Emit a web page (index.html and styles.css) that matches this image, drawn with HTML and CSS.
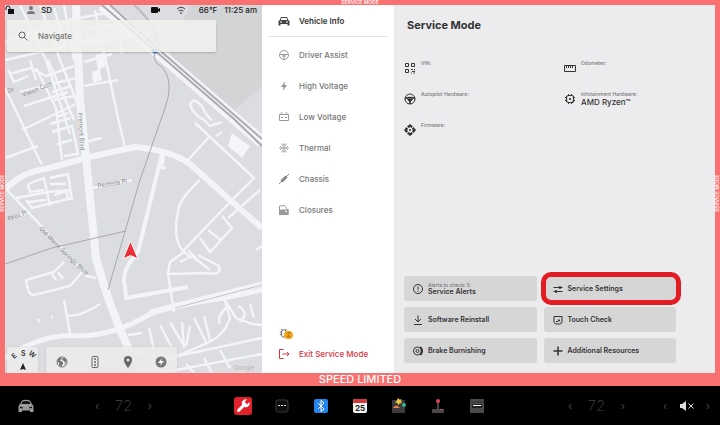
FILE: index.html
```
<!DOCTYPE html>
<html lang="en">
<head>
    <meta charset="UTF-8">
    <meta name="viewport" content="width=device-width, initial-scale=1.0">
    <title>Service Mode</title>
    <link rel="stylesheet" href="styles.css">
</head>
<body>
    <div class="frame">
        <div class="mode-label top">SERVICE MODE</div>
        <div class="mode-label left">SERVICE MODE</div>
        <div class="mode-label right">SERVICE MODE</div>

        <section class="map">
            <svg class="map-canvas" viewBox="5 5 257 368" preserveAspectRatio="xMidYMid slice" aria-hidden="true">
                <rect x="5" y="5" width="257" height="368" fill="#dcdde0"/>
                <path d="M190 5H262V86L232 112L168 58Z" fill="#d2d4d6"/>
                <!-- side streets -->
                <g fill="none" stroke="#f4f5f8" stroke-width="2.400">
                    <path d="M5 42L70 20L110 12M5 60L76 44L118 30M20 5L46 60L70 134M5 88L42 165M40 5L60 60L80 110M54 8L66 50M64 5L74 60M10 74L30 68L46 76L74 66M20 92L76 78M24 106L68 92M22 130L76 104M5 158L38 146M36 68L56 108L62 160M48 60L74 120M30 60L36 80M8 70L14 82L28 76M84 30L130 22M84 44L150 34M95 10L104 55M118 20L122 54M84 86L118 80M104 52L118 118L125 147M84 62L112 54M84 142L102 138"/>
                    <path d="M52 92L72 86M54 100L74 96M50 124L70 118M52 132L72 126L78 154L64 156M57 144L72 140M56 117L68 113"/>
                    <path d="M28 184L44 178L50 206M28 184L30 192L44 190M50 178L68 174L72 200M50 184L66 184M16 198L48 192L70 190M26 200L32 208L72 198M28 202L46 200M54 195L66 191L68 198"/>
                    <path d="M7 190L70 256L86 276L96 278M84 270L70 286L34 295Q28 296 26 280L54 272L64 262M52 274L56 280M58 272L63 279M64 300L70 333M68 316Q82 316 100 304M92 188L132 180M14 216L28 213"/>
                    <path d="M200 180Q178 200 178 212Q172 240 184 252L192 258M184 252L170 262L168 274L174 312M260 190L228 218M209 137L188 160M195 123L208 135L254 178L230 202M216 136L222 132M168 274L208 273Q222 276 219 266L198 255M230 202L184 250M222 216L232 228L210 252L200 238M208 230L221 240M188 250L196 258M180 262L192 256L210 270M164 154L162 168L166 168"/>
                    <path d="M190 104Q194 96 203 108Q206 116 212 120M190 104Q192 114 204 120L210 126L222 122M128 335L142 333M149 328L154 350M160 325L172 348M170 322L184 346M182 322L184 348M194 318L206 342M204 316L210 340M190 326L186 346M130 350L168 360L200 346Q224 338 230 318L224 298M226 302L236 318L252 324L262 325M238 306Q250 312 240 322M220 324Q216 316 228 306M250 304L254 318M150 362L262 338M160 373L262 354M186 364L194 373M204 358L212 373M220 350L230 368M256 250L262 246"/>
                </g>
                <g fill="#f4f5f8">
                    <path d="M95 55L104 53L105 66L100 70L102 80L93 83L92 72L98 70Z"/>
                    <path d="M232 133L250 146L242 158L228 146Z"/>
                    <path d="M37 319l2 5 1-5zM51 316l2 4v-5z"/>
                </g>
                <!-- main roads -->
                <g fill="none" stroke="#f3f4f8" stroke-linejoin="round">
                    <path d="M162 154L138 252Q120 272 125 286L126 298L188 287" stroke-width="4"/>
                    <path d="M5 190Q20 172 50 168L85 158L135 147Q170 150 190 164L230 200L262 228" stroke-width="6"/>
                    <path d="M76 5L80 100L86 158L96 258Q108 304 130 352" stroke-width="8"/>
                    <path d="M5 358Q45 332 80 336Q116 335 150 314Q170 306 224 298L262 290M150 312L262 284" stroke-width="5"/>
                    <path d="M102 5L160 54L248 130L262 142" stroke-width="12"/>
                </g>
                <!-- freeway and rail -->
                <g fill="none" stroke="#acabb0" stroke-width="2">
                    <path d="M102 5L160 55L234 119L262 146M110 5L164 54L262 139"/>
                </g>
                <path d="M134 5Q160 28 158 50" fill="none" stroke="#bbbbc0" stroke-width="2"/>
                <path d="M155 52Q152 62 162 67Q172 78 168 98Q164 112 158 128L140 180L108 290M5 264L52 248L126 231" fill="none" stroke="#a9a9ad"/>
                <path d="M175 308L262 285" fill="none" stroke="#c4c4c8"/>
                <path d="M151 49h8l-1 3q-3 3-6 0z" fill="#4b78c8"/>
                <g class="street">
                    <text transform="translate(78 113) rotate(86)">Fremont Blvd</text>
                    <text transform="translate(23 97) rotate(-22)">Vision Com</text>
                    <text transform="translate(98 188) rotate(-10)">Pestena Pl</text>
                    <text transform="translate(39 229) rotate(45)">Old Warm Springs Blvd</text>
                    <text transform="translate(8 220) rotate(-16)">eyes Pl</text>
                    <text transform="translate(8 93) rotate(-16)">Dr</text>
                    <text class="city" x="90" y="371">Fremont, CA</text>
                    <text class="google" x="234" y="370">Google</text>
                </g>
                <path d="M130.500 241L138 259L130.500 255.500L123 259Z" fill="#ee2f3b" stroke="#fff"/>
            </svg>

            <header class="status">
                <svg class="lock" viewBox="0 0 10 10"><path d="M1 5V3a2 2 0 0 1 4 0v2" fill="none" stroke="#111"/><rect x="3" y="4" width="6" height="5" fill="#111"/></svg>
                <svg class="person" viewBox="0 0 10 10"><circle cx="5" cy="3" r="2" fill="#777"/><path d="M1 9q0-3 4-3t4 3z" fill="#777"/></svg>
                <span>SD</span>
                <svg class="camera" viewBox="0 0 10 10"><rect x="0" y="2" width="7" height="6" rx="1" fill="#111"/><path d="M7 4l2-1v4l-2-1z" fill="#111"/></svg>
                <svg class="wifi" viewBox="0 0 10 10" fill="none" stroke="#444"><path d="M1 4q4-3.500 8 0M2.500 6q2.500-2 5 0"/><circle cx="5" cy="8" r=".5"/></svg>
                <span class="temp">66°F</span>
                <time>11:25 am</time>
            </header>

            <label class="search">
                <svg viewBox="0 0 10 10" fill="none" stroke="#666"><circle cx="4" cy="4" r="3"/><path d="M6.200 6.200L9.500 9.500"/></svg>
                <input type="text" placeholder="Navigate" aria-label="Navigate">
            </label>

            <div class="map-tools">
                <button class="compass" aria-label="Compass">
                    <svg viewBox="0 0 31 26">
                        <text transform="translate(7 12) rotate(-40)">E</text>
                        <text x="14" y="9">S</text>
                        <text transform="translate(21 7) rotate(40)">W</text>
                        <path d="M16 16l3 7-3-1-3 1z" fill="#222"/>
                    </svg>
                </button>
                <div class="toolbar">
                    <button aria-label="Satellite"><svg viewBox="0 0 12 12"><circle cx="6" cy="6" r="5" fill="#f2f2f2" stroke="#777"/><path d="M1 5l1-2 3-2 1 2-2 1 1 1 2 1v2l-2 3-2-2V7zM7 2l2 0 2 3-2 2-1-2-2-1zM8 8l2-1-1 2z" fill="#777"/></svg></button>
                    <button aria-label="Traffic"><svg viewBox="0 0 12 12"><rect x="3" y=".5" width="6" height="11" rx="1" fill="none" stroke="#666"/><circle cx="6" cy="3" r="1" fill="#666"/><circle cx="6" cy="6" r="1" fill="#666"/><circle cx="6" cy="9" r="1" fill="#666"/></svg></button>
                    <button aria-label="Places"><svg viewBox="0 0 12 12"><path d="M6 12Q2 7 2 4a4 4 0 0 1 8 0q0 3-4 8zM6 2.500a1.500 1.500 0 1 0 0 3 1.500 1.500 0 0 0 0-3z" fill="#666" fill-rule="evenodd"/></svg></button>
                    <button aria-label="Charging"><svg viewBox="0 0 12 12"><circle cx="6" cy="6" r="5.500" fill="#777"/><path d="M7 2L3 7h3l-1 3 4-5H6z" fill="#fff"/></svg></button>
                </div>
            </div>
        </section>

        <nav class="sidebar">
            <a class="active" href="#"><svg viewBox="0 0 12 12"><path d="M3 2h6l1.200 3L11.500 6v4.500h-2V9h-7v1.500h-2V6L1.800 5z" fill="#444"/><path d="M3.500 3h5l.6 2H2.900zM2 6.500h2v1H2zM8 6.500h2v1H8z" fill="#fff"/></svg>Vehicle Info</a>
            <a href="#"><svg viewBox="0 0 12 12" fill="none" stroke="#999"><circle cx="6" cy="6" r="4.500"/><path d="M1.500 5.500h9M6 6v4.500M4 7h4"/></svg>Driver Assist</a>
            <a href="#"><svg viewBox="0 0 12 12"><path d="M7 1L3 7h2.500L5 11l4-6H6.500z" fill="#999"/></svg>High Voltage</a>
            <a href="#"><svg viewBox="0 0 12 12" fill="none" stroke="#999"><path d="M1.500 3.500h9v6h-9zM2.500 2h2M7.500 2h2M3 6.500h2M7 6.500h2"/></svg>Low Voltage</a>
            <a href="#"><svg viewBox="0 0 12 12" fill="none" stroke="#999" stroke-width=".8"><path d="M1 6h10M3.500 1.700l5 8.600M8.500 1.700l-5 8.600M2 4l2 2-2 2M10 4L8 6l2 2M5 1.500l1 2 1-2M5 10.500l1-2 1 2"/></svg>Thermal</a>
            <a href="#"><svg viewBox="0 0 12 12" stroke="#888"><path d="M1 11l3-3M8 4l3-3"/><path d="M3.500 8.500l5-5" stroke-width="3"/></svg>Chassis</a>
            <a href="#"><svg viewBox="0 0 12 12"><path d="M1.500 6V2l5-.5L9.500 5.500" fill="none" stroke="#999"/><path d="M1 5.500h10l-.5 5.500H1zM7 7h2v1H7z" fill="#999" fill-rule="evenodd"/></svg>Closures</a>
            <div class="bug">
                <svg viewBox="0 0 12 12" fill="none" stroke="#555"><path d="M3 5q0-3 3-3t3 3v3q0 3-3 3T3 8zM3 1l1 2M9 1L8 3M1 5h2M1 8h2"/></svg>
                <span class="badge">2</span>
            </div>
            <a class="exit" href="#"><svg viewBox="0 0 12 12" fill="none" stroke="#d8343f"><path d="M5.500 1.500h-4v9h4M4.500 6H11M9 4l2 2-2 2"/></svg>Exit Service Mode</a>
        </nav>

        <main class="content">
            <h1>Service Mode</h1>
            <dl class="info">
                <div>
                    <svg viewBox="0 0 12 12" fill="none" stroke="#333"><path d="M1.500 1.500h3v3h-3zM7.500 1.500h3v3h-3zM1.500 7.500h3v3h-3z"/><path d="M7 7.500h2M10 7.500h1M8 9.500h3M7 11h1M9.500 11h1.500"/></svg>
                    <dt>VIN:</dt><dd></dd>
                </div>
                <div>
                    <svg viewBox="0 0 12 12" fill="none" stroke="#333"><path d="M.5 3.500h11v6H.5zM2.500 4v2M4.500 4v2M6.500 4v2M8.500 4v2"/></svg>
                    <dt>Odometer:</dt><dd></dd>
                </div>
                <div>
                    <svg viewBox="0 0 12 12" fill="none" stroke="#333"><circle cx="6" cy="6" r="5"/><path d="M1 5.500q5-2 10 0M6 7v4" stroke-width="1.500"/><path d="M3.500 6h5L7 8H5z" fill="#333"/></svg>
                    <dt>Autopilot Hardware:</dt><dd></dd>
                </div>
                <div>
                    <svg viewBox="0 0 12 12" fill="none" stroke="#333"><rect x="2.500" y="2.500" width="7" height="7" rx="2" stroke-width="1.200"/><path d="M4.500 1v2M7.500 1v2M4.500 9v2M7.500 9v2M1 4.500h2M1 7.500h2M9 4.500h2M9 7.500h2"/><path d="M5.500 5.500h1v1h-1z" fill="#333"/></svg>
                    <dt>Infotainment Hardware:</dt><dd>AMD Ryzen™</dd>
                </div>
                <div>
                    <svg viewBox="0 0 12 12" fill="#333"><path d="M6 0l3 2.500L8 4Q6 2.500 4 4L3 2.500zM6 12l3-2.500L8 8Q6 9.500 4 8L3 9.500zM0 6l2.500-3L4 4Q2.500 6 4 8L2.500 9zM12 6L9.500 3 8 4q1.500 2 0 4l1.500 1z"/><path d="M2 2l8 8M10 2l-8 8" stroke="#ececee"/><circle cx="6" cy="6" r="1"/></svg>
                    <dt>Firmware:</dt><dd></dd>
                </div>
            </dl>

            <div class="actions">
                <button><svg viewBox="0 0 12 12" fill="none" stroke="#333"><circle cx="6" cy="6" r="4.500"/><path d="M6 3.500v3M6 7.500v1"/></svg><span><small>Alerts to check: 5</small>Service Alerts</span></button>
                <button class="marked"><svg viewBox="0 0 12 12" fill="none" stroke="#333"><path d="M1.500 4.500h9M1.500 8.500h9"/><path d="M8 3v3M4 7v3" stroke-width="1.500"/></svg><span>Service Settings</span></button>
                <button><svg viewBox="0 0 12 12" fill="none" stroke="#333"><path d="M6 1.500v6M3 5l3 3 3-3M2 10.500h8"/></svg><span>Software Reinstall</span></button>
                <button><svg viewBox="0 0 12 12" fill="none" stroke="#333"><path d="M2 2.500h8v6L8 10H4L2 8.500zM4 7.500h2l1-2 1 2"/></svg><span>Touch Check</span></button>
                <button><svg viewBox="0 0 12 12" fill="none" stroke="#333"><circle cx="5.500" cy="6" r="4"/><circle cx="5.500" cy="6" r="1.500"/><path d="M8.500 2q3 4 0 8" stroke-width="2"/></svg><span>Brake Burnishing</span></button>
                <button><svg viewBox="0 0 12 12" fill="none" stroke="#333"><path d="M6 1.500v9M1.500 6h9" stroke-width="1.500"/></svg><span>Additional Resources</span></button>
            </div>
        </main>

        <div class="banner">SPEED LIMITED</div>
    </div>

    <footer class="dock">
        <button class="car" aria-label="Car"><svg viewBox="0 0 16 14"><path d="M4 1.500Q8 0 12 1.500L14 5l1.500 2v6H12v-1.500H4V13H.5V7L2 5z" fill="#999"/><path d="M4.500 2.500Q8 1.500 11.500 2.500L12.500 5h-9zM2 7.500l3 1v1l-3-.5zM14 7.500l-3 1v1l3-.5z" fill="#111"/></svg></button>
        <div class="climate"><button aria-label="Cooler">‹</button><span>72</span><button aria-label="Warmer">›</button></div>
        <div class="apps">
            <button aria-label="Service"><svg viewBox="0 0 18 18"><rect width="18" height="18" rx="3" fill="#e0212b"/><path d="M4.500 13.500L11 7" stroke="#fff" stroke-width="3" stroke-linecap="round"/><path d="M15.500 5L13 7.500 10.500 5 13 2.500a4 4 0 1 0 2.500 2.500z" fill="#fff"/></svg></button>
            <button aria-label="All apps"><svg viewBox="0 0 18 18"><rect x="3" y="3" width="12" height="12" rx="2" fill="#0d0d0d" stroke="#3a3a3a"/><path d="M5 8.500h2M8 8.500h2M11 8.500h2" stroke="#ddd"/></svg></button>
            <button aria-label="Bluetooth"><svg viewBox="0 0 18 18"><rect x="2" y="2" width="14" height="14" rx="2" fill="#2584ee"/><path d="M6 6l6 6-3 2.500v-11L12 6l-6 6" fill="none" stroke="#fff"/></svg></button>
            <button aria-label="Calendar"><svg viewBox="0 0 18 18"><rect x="2" y="2" width="14" height="14" rx="2" fill="#f4f4f4"/><path d="M2 6V4q0-2 2-2h10q2 0 2 2v2z" fill="#d23a3a"/><text class="day" x="9" y="14">25</text></svg></button>
            <button aria-label="Toybox"><svg viewBox="0 0 18 18"><rect x="2" y="3" width="13" height="13" rx="1" fill="#3c3c3e"/><path d="M8 1l1.500 1.500 2-.2-.5 2 1 1.700-2.200.2L8.500 8 7.300 6 5 5.500l1.500-1.500z" fill="#f0c33c"/><circle cx="14" cy="8" r="2" fill="#26b795"/><path d="M3 11q3-5 7 0z" fill="#ef7e43"/></svg></button>
            <button aria-label="Arcade"><svg viewBox="0 0 18 18"><path d="M9 5v8" stroke="#888"/><circle cx="9" cy="4" r="2" fill="#e5404f"/><path d="M3 12h12v4H3z" fill="#4a4648"/><path d="M11 12.500h3" stroke="#d8434d"/></svg></button>
            <button aria-label="Glovebox"><svg viewBox="0 0 18 18"><rect x="2" y="2" width="14" height="14" rx="1" fill="#4b4b4b"/><path d="M2 5h14" stroke="#333"/><rect x="4" y="7" width="10" height="4" fill="#222"/><path d="M5 8.500h8" stroke="#fff"/></svg></button>
        </div>
        <div class="climate"><button aria-label="Cooler">‹</button><span>72</span><button aria-label="Warmer">›</button></div>
        <div class="volume"><button aria-label="Volume down">‹</button><button aria-label="Mute"><svg viewBox="0 0 16 12"><path d="M1 4h2l4-3v10L3 8H1z" fill="#ddd"/><path d="M9.500 3.500l5 5M14.500 3.500l-5 5" stroke="#ddd"/></svg></button><button aria-label="Volume up">›</button></div>
    </footer>
</body>
</html>
```

FILE: styles.css
```
* {
    box-sizing: border-box;
}
body {
    margin: 0;
    min-height: 100vh;
    display: flex;
    flex-direction: column;
    background-color: #000;
    color: #333;
    font-family: Inter, "Liberation Sans", sans-serif;
    font-size: 8px;
}
button {
    padding: 0;
    border: none;
    background: none;
    color: inherit;
    font: inherit;
    cursor: pointer;
}
svg {
    display: block;
    flex: none;
}

/* red service mode frame */
.frame {
    position: relative;
    flex: 1;
    display: grid;
    grid-template-columns: 257fr 132fr 321fr;
    grid-template-rows: 1fr 13px;
    padding: 5px 5px 0;
    background-color: #f97071;
}
.mode-label {
    position: absolute;
    color: #fff;
    font-size: 5px;
    font-weight: 500;
    line-height: 5px;
    text-align: center;
}
.mode-label.top {
    top: 0;
    left: 0;
    right: 0;
}
.mode-label.left,
.mode-label.right {
    top: 0;
    bottom: 0;
    width: 5px;
    writing-mode: vertical-rl;
    transform: rotate(180deg);
}
.mode-label.left {
    left: 0;
}
.mode-label.right {
    right: 0;
}
.banner {
    grid-column: 1 / -1;
    color: #fff;
    font-size: 11px;
    font-weight: 500;
    line-height: 13px;
    text-align: center;
}

/* map */
.map {
    position: relative;
    display: flex;
    flex-direction: column;
    overflow: hidden;
}
.map-canvas {
    position: absolute;
    width: 100%;
    height: 100%;
}
.street {
    fill: #888;
    font-size: 6px;
}
.city {
    fill: #bbb;
    font-size: 8px;
}
.google {
    fill: #b8b8bc;
}
.status {
    position: relative;
    display: flex;
    align-items: center;
    height: 10px;
    padding-right: 5px;
    color: #222;
    font-size: 8px;
    font-weight: 500;
}
.status svg {
    width: 10px;
    height: 10px;
}
.person {
    margin: 0 5px 0 11px;
}
.camera {
    margin-left: auto;
    margin-right: 15px;
}
.temp {
    margin: 0 7px 0 13px;
}
.search {
    position: relative;
    display: flex;
    align-items: center;
    gap: 10px;
    height: 32px;
    margin: 5px 46px 0 2px;
    padding: 0 11px;
    border-radius: 2px;
    background-color: rgba(240, 240, 238, 0.88);
    box-shadow: 0 1px 2px rgba(0, 0, 0, 0.2);
}
.search svg {
    width: 10px;
    height: 10px;
}
.search input {
    flex: 1;
    min-width: 0;
    padding: 0;
    border: none;
    outline: none;
    background: none;
    font: inherit;
    font-weight: 500;
}
.search input::placeholder {
    color: #777;
    opacity: 1;
}
.map-tools {
    position: relative;
    display: flex;
    gap: 8px;
    height: 26px;
    margin: auto 0 0 2px;
}
.compass,
.toolbar {
    border-radius: 2px 2px 0 0;
    background-color: rgba(236, 236, 236, 0.88);
    box-shadow: 0 0 2px rgba(0, 0, 0, 0.15);
}
.compass svg {
    width: 31px;
    height: 26px;
    fill: #333;
    font-size: 7px;
    font-weight: 600;
}
.toolbar {
    display: flex;
    align-items: center;
    gap: 21px;
    padding: 4px 10px 0;
}
.toolbar svg {
    width: 12px;
    height: 12px;
}

/* sidebar */
.sidebar {
    display: flex;
    flex-direction: column;
    padding: 0 7px 4px;
    background-color: #fff;
}
.sidebar a {
    display: flex;
    align-items: center;
    gap: 9px;
    height: 31px;
    padding-left: 9px;
    color: #777;
    font-weight: 500;
    text-decoration: none;
}
.sidebar svg,
.content svg {
    width: 12px;
    height: 12px;
}
.sidebar .active {
    height: 32px;
    margin-bottom: 2px;
    border-bottom: 1px solid #e4e4e6;
    color: #333;
    font-weight: 600;
}
.sidebar .exit {
    color: #d8343f;
}
.bug {
    position: relative;
    width: 24px;
    margin-top: auto;
    padding-left: 10px;
}
.bug svg {
    width: 10px;
    height: 10px;
}
.badge {
    position: absolute;
    top: 3px;
    right: 0;
    width: 9px;
    height: 8px;
    border-radius: 4px;
    background-color: #f4a51c;
    color: #8a5a00;
    font-size: 6px;
    line-height: 8px;
    text-align: center;
}

/* main panel */
.content {
    display: flex;
    flex-direction: column;
    padding: 12px 39px 10px 10px;
    background-color: #ececee;
}
h1 {
    margin: 0 0 24px 3px;
    font-size: 11px;
    font-weight: 700;
    line-height: 16px;
}
.info {
    display: grid;
    grid-template-columns: 1fr 112px;
    row-gap: 10px;
    margin: 0;
}
.info div {
    display: grid;
    grid-template-columns: 12px 1fr;
    grid-template-rows: 8px 13px;
    column-gap: 5px;
}
.info svg {
    grid-row: 1 / 3;
    align-self: center;
}
dt {
    color: #777;
    font-size: 5px;
    font-weight: 500;
    line-height: 12px;
}
dd {
    margin: 0;
    font-weight: 500;
    line-height: 12px;
}
.actions {
    display: grid;
    grid-template-columns: 1fr 1fr;
    gap: 6px 7px;
    margin-top: auto;
}
.actions button {
    position: relative;
    display: flex;
    align-items: center;
    gap: 4px;
    height: 25px;
    padding: 0 8px;
    border-radius: 3px;
    background-color: #d6d6d7;
    font-size: 7px;
    font-weight: 600;
    line-height: 8px;
    text-align: left;
}
.actions small {
    display: block;
    color: #777;
    font-size: 5px;
    font-weight: 500;
    line-height: 6px;
}
.marked::after {
    content: "";
    position: absolute;
    inset: -4px -5px -4px -3px;
    border: 5px solid #e31b23;
    border-radius: 10px;
}

/* bottom dock */
.dock {
    display: flex;
    align-items: center;
    height: 39px;
    padding: 0 10px 0 18px;
    color: #444;
}
.car {
    margin-right: 61px;
}
.car svg {
    width: 16px;
    height: 14px;
}
.climate,
.volume {
    display: flex;
    align-items: center;
    justify-content: space-between;
    font-size: 11px;
}
.climate {
    width: 57px;
}
.climate span {
    font-size: 15px;
    font-weight: 200;
}
.apps {
    display: flex;
    gap: 21px;
    margin: 0 auto;
}
.apps svg {
    width: 18px;
    height: 18px;
}
.day {
    fill: #222;
    font-size: 8px;
    font-weight: 700;
    text-anchor: middle;
}
.volume {
    width: 47px;
    margin-left: 38px;
}
.volume svg {
    width: 16px;
    height: 12px;
}
```
